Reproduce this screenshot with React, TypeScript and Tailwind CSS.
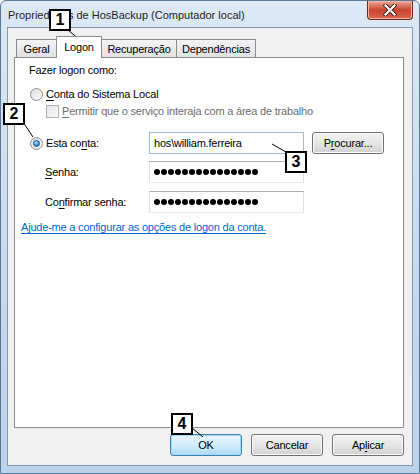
import React from 'react';

// Text with one mnemonic letter underlined, the way Win32 dialogs draw access keys
function Mn({ text, at }: { text: string; at: number }) {
  return (
    <span>
      {text.slice(0, at)}
      <span className="underline underline-offset-2">{text.charAt(at)}</span>
      {text.slice(at + 1)}
    </span>
  );
}

function Radio({ checked }: { checked?: boolean }) {
  return (
    <span className="flex h-[13px] w-[13px] shrink-0 items-center justify-center rounded-full border border-[#8e8f8f] bg-gradient-to-br from-[#dcdcdc] to-[#fbfbfb]">
      {checked && (
        <span className="h-[7px] w-[7px] rounded-full border border-[#1b4f86] bg-[radial-gradient(circle_at_40%_35%,#c9ecff_0%,#4aa3e0_45%,#17579b_100%)]" />
      )}
    </span>
  );
}

function Dots() {
  return (
    <span className="flex gap-[1px]">
      {Array.from({ length: 15 }).map((_, i) => (
        <span key={i} className="h-[6px] w-[6px] rounded-full bg-black" />
      ))}
    </span>
  );
}

function Button({ children, primary }: { children: React.ReactNode; primary?: boolean }) {
  return (
    <div
      className={
        primary
          ? 'flex h-[22px] w-[72px] items-center justify-center rounded-[3px] border border-[#3c7fb1] bg-gradient-to-b from-[#e9f5fd] via-[#d3ecfc] to-[#a9dbf6] shadow-[inset_0_0_0_1px_#a4dbfb]'
          : 'flex h-[22px] w-[72px] items-center justify-center rounded-[3px] border border-[#707070] bg-gradient-to-b from-[#f2f2f2] via-[#e6e6e6] to-[#d0d0d0] shadow-[inset_0_0_0_1px_#fcfcfc]'
      }
    >
      {children}
    </div>
  );
}

function Tab({ label, w, active }: { label: string; w: string; active?: boolean }) {
  if (active) {
    return (
      <div className={`${w} relative z-10 -mb-[1px] -ml-[1px] flex h-[22px] items-start justify-center border border-b-0 border-[#898c95] bg-white pt-[2px]`}>
        {label}
      </div>
    );
  }
  return (
    <div className={`${w} -ml-[1px] mt-[3px] flex h-[18px] items-center justify-center border border-b-0 border-[#898c95] bg-gradient-to-b from-[#f3f3f3] to-[#e2e2e2]`}>
      {label}
    </div>
  );
}

function Callout({ n, className }: { n: string; className: string }) {
  return (
    <div className={`absolute flex h-[22px] w-[22px] items-center justify-center border-2 border-black bg-white text-[16px] font-bold leading-none tracking-normal text-black ${className}`}>
      {n}
    </div>
  );
}

export default function App() {
  return (
    <div className="relative h-[474px] w-[420px] overflow-hidden bg-white font-['Liberation_Sans',Arial,sans-serif] text-[11px] leading-[16px] tracking-[-0.2px] text-black">
      {/* window frame */}
      <div className="flex h-full w-full flex-col rounded-t-[6px] border border-[#5d7896] bg-gradient-to-b from-[#dce8f5] via-[#c8dbef] to-[#bcd3ec]">
        {/* title bar */}
        <div className="flex h-[26px] items-start justify-between">
          <span className="pl-[7px] pt-[6px] text-[11px] tracking-normal text-[#1e1e1e]">Propriedades de HosBackup (Computador local)</span>
          <div className="mr-[6px] flex h-[19px] w-[46px] items-center justify-center rounded-b-[4px] border border-t-0 border-[#6b2a20] bg-gradient-to-b from-[#e9a899] via-[#c8452f] to-[#d8664a] shadow-[inset_0_0_0_1px_#f0b6a6]">
            <svg width="14" height="12" viewBox="0 0 14 12">
              <path d="M2.5 1.5 L11.5 10.5 M11.5 1.5 L2.5 10.5" stroke="#3b1810" strokeWidth="4" strokeLinecap="square" />
              <path d="M2.5 1.5 L11.5 10.5 M11.5 1.5 L2.5 10.5" stroke="#ffffff" strokeWidth="2.2" strokeLinecap="square" />
            </svg>
          </div>
        </div>

        {/* client area */}
        <div className="mx-[6px] flex h-[439px] flex-col border border-[#8497ad] bg-[#f0f0f0]">
          <div className="flex pl-[9px] pt-[8px]">
            <Tab label="Geral" w="w-[41px]" />
            <Tab label="Logon" w="w-[46px]" active />
            <Tab label="Recuperação" w="w-[76px]" />
            <Tab label="Dependências" w="w-[80px]" />
          </div>

          {/* tab page */}
          <div className="ml-[6px] mr-[8px] flex h-[371px] flex-col border border-[#898c95] bg-white">
            <div className="mt-[4px] pl-[14px]">Fazer logon como:</div>

            <div className="mt-[8px] flex items-center gap-[3px] pl-[15px]">
              <Radio />
              <Mn text="Conta do Sistema Local" at={0} />
            </div>

            <div className="mt-[1px] flex items-center gap-[3px] pl-[31px] text-[#6d6d6d]">
              <span className="h-[13px] w-[13px] border border-[#b1b1b1] bg-gradient-to-br from-[#e8e8e8] to-[#f7f7f7]" />
              <Mn text="Permitir que o serviço interaja com a área de trabalho" at={0} />
            </div>

            <div className="mt-[13px] flex items-center pl-[15px]">
              <div className="flex w-[119px] items-center gap-[3px]">
                <Radio checked />
                <Mn text="Esta conta:" at={7} />
              </div>
              <div className="flex h-[22px] w-[155px] items-center border border-[#9fbcdb] px-[4px]">hos\william.ferreira</div>
              <div className="ml-[8px]">
                <Button>
                  <Mn text="Procurar..." at={1} />
                </Button>
              </div>
            </div>

            <div className="mt-[7px] flex items-center pl-[30px]">
              <div className="w-[104px]">
                <Mn text="Senha:" at={0} />
              </div>
              <div className="flex h-[22px] w-[155px] items-center border border-[#abadb3] border-x-[#dbdfe6] border-b-[#e3e9ef] px-[4px]">
                <Dots />
              </div>
            </div>

            <div className="mt-[8px] flex items-center pl-[30px]">
              <div className="w-[104px]">
                <Mn text="Confirmar senha:" at={2} />
              </div>
              <div className="flex h-[22px] w-[155px] items-center border border-[#abadb3] border-x-[#dbdfe6] border-b-[#e3e9ef] px-[4px]">
                <Dots />
              </div>
            </div>

            <div className="mt-[6px] pl-[6px] text-[#0066cc] underline underline-offset-2">
              Ajude-me a configurar as opções de logon da conta.
            </div>
          </div>

          {/* dialog buttons */}
          <div className="mr-[8px] mt-[6px] flex justify-end gap-[9px]">
            <Button primary>OK</Button>
            <Button>Cancelar</Button>
            <Button>
              <Mn text="Aplicar" at={2} />
            </Button>
          </div>
        </div>
      </div>

      {/* numbered callouts */}
      <svg className="pointer-events-none absolute left-0 top-0" width="420" height="474">
        <line x1="68" y1="30" x2="80" y2="40" stroke="#000" strokeWidth="1" />
        <line x1="25" y1="125" x2="33" y2="137" stroke="#000" strokeWidth="1" />
        <line x1="272" y1="144" x2="286" y2="152" stroke="#000" strokeWidth="1" />
        <line x1="192" y1="428" x2="203" y2="437" stroke="#000" strokeWidth="1" />
      </svg>
      <Callout n="1" className="left-[49px] top-[9px]" />
      <Callout n="2" className="left-[3px] top-[103px]" />
      <Callout n="3" className="left-[285px] top-[151px]" />
      <Callout n="4" className="left-[171px] top-[413px]" />
    </div>
  );
}
